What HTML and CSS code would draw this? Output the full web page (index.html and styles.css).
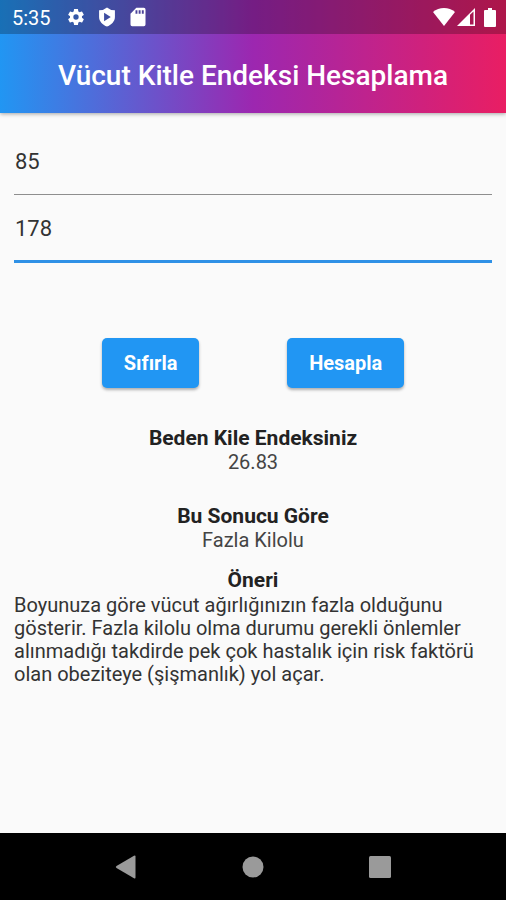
FILE: index.html
```html
<!DOCTYPE html>
<html lang="tr">
<head>
<meta charset="utf-8">
<meta name="viewport" content="width=device-width, initial-scale=1">
<title>Vücut Kitle Endeksi Hesaplama</title>
<link rel="stylesheet" href="styles.css">
</head>
<body>
<header class="app-header">
  <div class="status-bar">
    <span class="clock">5:35</span>
    <div class="status-left">
      <svg class="icon" viewBox="0 0 24 24" aria-hidden="true"><path d="M19.14 12.94c.04-.3.06-.61.06-.94s-.02-.64-.07-.94l2.03-1.58c.18-.14.23-.41.12-.61l-1.92-3.32c-.12-.22-.37-.29-.59-.22l-2.39.96c-.5-.38-1.03-.7-1.62-.94l-.36-2.54c-.04-.24-.24-.41-.48-.41h-3.84c-.24 0-.43.17-.47.41l-.36 2.54c-.59.24-1.13.57-1.62.94l-2.39-.96c-.22-.08-.47 0-.59.22L2.74 8.87c-.12.21-.08.47.12.61l2.03 1.58c-.05.3-.09.63-.09.94s.02.64.07.94l-2.03 1.58c-.18.14-.23.41-.12.61l1.92 3.32c.12.22.37.29.59.22l2.39-.96c.5.38 1.03.7 1.62.94l.36 2.54c.05.24.24.41.48.41h3.84c.24 0 .44-.17.47-.41l.36-2.54c.59-.24 1.13-.56 1.62-.94l2.39.96c.22.08.47 0 .59-.22l1.92-3.32c.12-.22.07-.47-.12-.61l-2.01-1.58zM12 15.2A3.2 3.2 0 1 1 12 8.800a3.200 3.200 0 0 1 0 6.400z"/></svg>
      <svg class="icon" viewBox="0 0 24 24" aria-hidden="true"><path fill-rule="evenodd" d="M12 .500Q16 4 21.500 4V12C21.500 17.500 17 21.500 12 23.500C7 21.500 2.500 17.500 2.500 12V4Q8 4 12 .500zM8.500 7V17L16.500 12z"/></svg>
      <svg class="icon" viewBox="0 0 24 24" aria-hidden="true"><path fill-rule="evenodd" d="M18.500 1H10L3 8V21a2 2 0 0 0 2 2h14a2 2 0 0 0 2-2V3a2 2 0 0 0-2-2zM9 4h2.300v4H9zM12.800 4h2.300v4h-2.300zM16.600 4h2.300v4h-2.300z"/></svg>
    </div>
    <div class="status-right">
      <svg class="wifi" viewBox="0 0 22 18" aria-hidden="true"><path d="M0 4C6-1.300 16-1.300 22 4L11 18z"/></svg>
      <svg class="signal" viewBox="0 0 18 18" aria-hidden="true"><path fill-rule="evenodd" d="M18 0V18H0zM13 6.700V16.500H16.500V3.500z"/></svg>
      <svg class="battery" viewBox="0 0 12 19" aria-hidden="true"><path d="M4 0h4v2h3q1 0 1 1v15q0 1-1 1H1q-1 0-1-1V3q0-1 1-1h3z"/></svg>
    </div>
  </div>
  <h1 class="title">Vücut Kitle Endeksi Hesaplama</h1>
</header>
<main class="content">
  <form class="form">
    <input class="field" type="text" inputmode="decimal" aria-label="Kilo" value="85">
    <input class="field field-active" type="text" inputmode="decimal" aria-label="Boy" value="178">
    <div class="actions">
      <button class="button" type="button">Sıfırla</button>
      <button class="button" type="button">Hesapla</button>
    </div>
  </form>
  <section class="result result-index">
    <h2 class="heading">Beden Kile Endeksiniz</h2>
    <p class="value">26.83</p>
  </section>
  <section class="result result-class">
    <h2 class="heading">Bu Sonucu Göre</h2>
    <p class="value">Fazla Kilolu</p>
  </section>
  <section class="result">
    <h2 class="heading">Öneri</h2>
    <p class="advice">Boyunuza göre vücut ağırlığınızın fazla olduğunu gösterir. Fazla kilolu olma durumu gerekli önlemler alınmadığı takdirde pek çok hastalık için risk faktörü olan obeziteye (şişmanlık) yol açar.</p>
  </section>
</main>
<nav class="nav-bar" aria-label="Sistem">
  <button class="nav-button" type="button" aria-label="Geri"><svg class="nav-icon" viewBox="0 0 24 24"><path d="M21.500 1.500V22.500Q21.500 24 20 23.200L2.500 13Q1 12 2.500 11L20 .800Q21.500 0 21.500 1.500z"/></svg></button>
  <button class="nav-button" type="button" aria-label="Ana ekran"><svg class="nav-icon" viewBox="0 0 24 24"><circle cx="12" cy="12" r="10.500"/></svg></button>
  <button class="nav-button" type="button" aria-label="Son uygulamalar"><svg class="nav-icon" viewBox="0 0 24 24"><rect x="1" y="1" width="22" height="22" rx="1.500"/></svg></button>
</nav>
</body>
</html>
```

FILE: styles.css
```css
* {
  box-sizing: border-box;
}

body {
  margin: 0;
  min-height: 100vh;
  display: flex;
  flex-direction: column;
  background: #fafafa;
  color: #222;
  font-family: Roboto, "Liberation Sans", sans-serif;
  font-size: 20px;
}

h1,
h2,
p {
  margin: 0;
}

svg {
  display: block;
  fill: currentColor;
}

.app-header {
  background: linear-gradient(to right, #2196f3, #9c27b0 50%, #e91e63);
  color: #fff;
  box-shadow: 0 1px 4px rgba(0, 0, 0, 0.35);
}

.status-bar {
  display: flex;
  align-items: center;
  height: 34px;
  padding: 0 10px 0 12px;
  background: rgba(0, 0, 0, 0.25);
}

.clock {
  font-size: 20px;
  line-height: 24px;
  padding-top: 2px;
}

.status-left {
  display: flex;
  gap: 11px;
  margin-left: 15px;
}

.icon {
  width: 20px;
  height: 20px;
}

.status-right {
  display: flex;
  align-items: center;
  margin-left: auto;
}

.wifi {
  width: 22px;
  height: 18px;
}

.signal {
  width: 18px;
  height: 18px;
  margin-left: 2px;
}

.battery {
  width: 12px;
  height: 19px;
  margin-left: 9px;
}

.title {
  padding: 26px 16px 21px;
  font-size: 28px;
  font-weight: 500;
  line-height: 32px;
  text-align: center;
  white-space: nowrap;
}

.content {
  flex: 1;
  padding: 14px 14px 24px;
}

.form {
  display: flex;
  flex-direction: column;
}

.field {
  width: 100%;
  height: 68px;
  padding: 2px 1px 0;
  border: 0;
  border-bottom: 1px solid #8e8e8e;
  border-radius: 0;
  outline: 0;
  background: transparent;
  color: #333;
  font: inherit;
  font-size: 22px;
}

.field-active {
  border-bottom: 3px solid #2f91e6;
}

.actions {
  display: flex;
  justify-content: space-evenly;
  margin-top: 75px;
}

.button {
  height: 50px;
  padding: 0 22px;
  border: 0;
  border-radius: 5px;
  background: #2196f3;
  box-shadow: 0 2px 3px rgba(0, 0, 0, 0.3);
  color: #fff;
  font: inherit;
  font-weight: 700;
}

.result-index {
  margin-top: 38px;
  margin-bottom: 30px;
}

.result-class {
  margin-bottom: 16px;
}

.heading {
  font-size: 21px;
  font-weight: 700;
  line-height: 24px;
  text-align: center;
}

.value {
  line-height: 24px;
  text-align: center;
  color: #444;
}

.advice {
  padding-top: 2px;
  line-height: 23px;
  color: #333;
}

.nav-bar {
  display: flex;
  justify-content: center;
  gap: 103px;
  height: 67px;
  align-items: center;
  background: #000;
}

.nav-button {
  padding: 0;
  border: 0;
  background: none;
  color: #9a9a9a;
}

.nav-icon {
  width: 24px;
  height: 24px;
}
```
